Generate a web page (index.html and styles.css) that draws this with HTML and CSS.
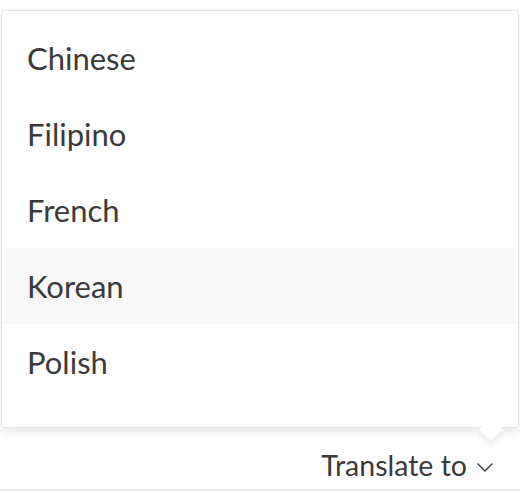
FILE: index.html
```html
<!DOCTYPE html>
<html>
<head>
<meta charset="utf-8">
<link rel="stylesheet" href="styles.css">
</head>
<body>
<div class="page">
  <div class="menu">
    <ul class="list">
      <li class="item">Chinese</li>
      <li class="item">Filipino</li>
      <li class="item">French</li>
      <li class="item active">Korean</li>
      <li class="item">Polish</li>
    </ul>
    <span class="caret"></span>
  </div>
  <div class="bar">
    <button class="trigger">Translate to
      <svg class="chev" width="18" height="12" viewBox="0 0 18 12"><path d="M1.5 2.5 L9 10 L16.5 2.5" fill="none" stroke="#3a3a3a" stroke-width="1.4"/></svg>
    </button>
  </div>
</div>
</body>
</html>
```
FILE: styles.css
```css
html, body { margin: 0; padding: 0; background: #fff; }
body { font-family: Lato, "Open Sans", sans-serif; color: #3a3a3a; }
.page { width: 520px; height: 493px; display: flex; flex-direction: column; }
.menu {
  position: relative;
  margin: 10px 1px 0 1px;
  height: 418px;
  box-sizing: border-box;
  border: 1px solid #e3e3e3;
  border-radius: 4px;
  background: #fff;
  box-shadow: 0 4px 10px rgba(0,0,0,0.09);
}
.list { list-style: none; margin: 0; padding: 9px 0 0 0; }
.item {
  height: 76px;
  display: flex;
  align-items: center;
  padding-left: 25px;
  font-size: 31px;
  font-weight: 400;
  color: #3a3a3a;
}
.item.active { background: #f8f8f8; }
.caret {
  position: absolute;
  right: 18px;
  bottom: -12px;
  width: 17px;
  height: 17px;
  background: #fff;
  transform: rotate(45deg);
  box-shadow: 3px 3px 5px rgba(0,0,0,0.06);
  border-right: 1px solid #ececec;
  border-bottom: 1px solid #ececec;
}
.bar {
  flex: 1;
  display: flex;
  justify-content: flex-end;
  align-items: flex-end;
  border-bottom: 2px solid #e6e6e6;
  margin-bottom: 2px;
}
.trigger {
  font-family: Lato, "Open Sans", sans-serif;
  font-size: 28.5px;
  font-weight: 400;
  color: #3a3a3a;
  background: none;
  border: 0;
  padding: 0 26px 7px 0;
  display: flex;
  align-items: center;
  gap: 9px;
}
.chev { margin-top: 3px; }
```
